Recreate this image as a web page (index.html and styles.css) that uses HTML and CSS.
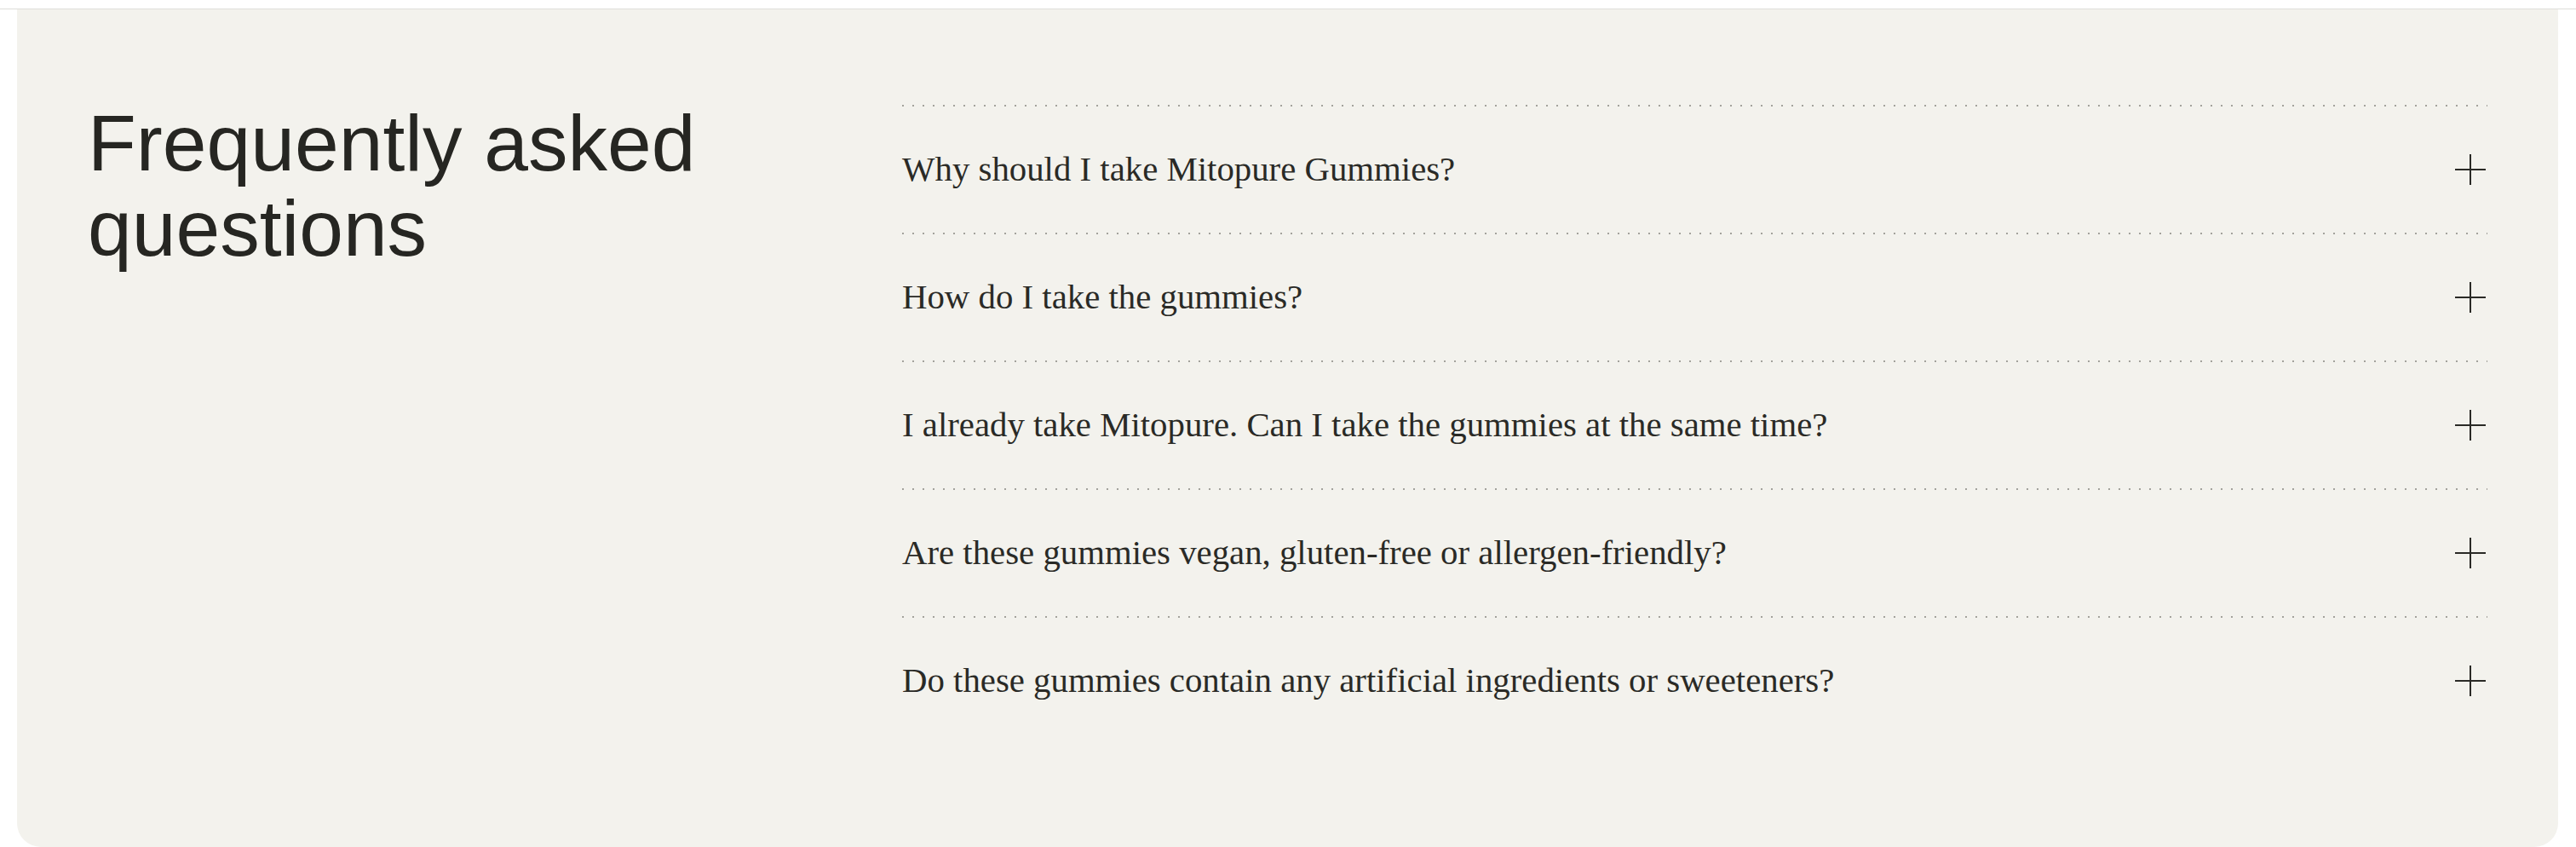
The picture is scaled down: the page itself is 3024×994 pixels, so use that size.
FILE: index.html
```html
<!DOCTYPE html>
<html lang="en">
<head>
<meta charset="utf-8">
<title>FAQ</title>
<link rel="stylesheet" href="styles.css">
</head>
<body>
<div class="topbar"></div>
<section class="faq">
  <h2 class="faq-title">Frequently asked<br>questions</h2>
  <div class="faq-list">
    <div class="faq-item"><span class="q">Why should I take Mitopure Gummies?</span><span class="plus"></span></div>
    <div class="faq-item"><span class="q">How do I take the gummies?</span><span class="plus"></span></div>
    <div class="faq-item"><span class="q">I already take Mitopure. Can I take the gummies at the same time?</span><span class="plus"></span></div>
    <div class="faq-item"><span class="q">Are these gummies vegan, gluten-free or allergen-friendly?</span><span class="plus"></span></div>
    <div class="faq-item"><span class="q">Do these gummies contain any artificial ingredients or sweeteners?</span><span class="plus"></span></div>
  </div>
</section>
</body>
</html>
```

FILE: styles.css
```css
html, body {
  margin: 0;
  padding: 0;
  background: #ffffff;
}
body {
  font-family: "Liberation Sans", Arial, sans-serif;
  color: #262622;
}
.topbar {
  height: 10px;
  border-bottom: 1px solid #deded9;
  background: #ffffff;
}
.faq {
  margin: 0 21px 0 20px;
  height: 983px;
  box-sizing: border-box;
  background: #f3f2ed;
  border-radius: 0 0 28px 28px;
  padding: 107px 83px 0 83px;
  display: grid;
  grid-template-columns: 956px 1fr;
  align-items: start;
}
.faq-title {
  margin: 0;
  font-family: "Liberation Sans", Arial, sans-serif;
  font-weight: 400;
  font-size: 93px;
  line-height: 100px;
  letter-spacing: 0;
  color: #262622;
}
.faq-list {
  margin-top: 5px;
  display: flex;
  flex-direction: column;
}
.faq-item {
  height: 150px;
  box-sizing: border-box;
  display: flex;
  align-items: center;
  justify-content: space-between;
  background-image: repeating-linear-gradient(to right, #a3a29c 0 2px, transparent 2px 12px);
  background-size: 100% 2px;
  background-repeat: no-repeat;
  background-position: 0 0;
  padding-top: 2px;
}
.q {
  font-family: "Liberation Serif", "Times New Roman", serif;
  font-size: 40.8px;
  line-height: 48px;
  color: #2a2a26;
  letter-spacing: 0;
}
.plus {
  position: relative;
  width: 36px;
  height: 36px;
  margin-right: 2px;
  flex: none;
}
.plus::before,
.plus::after {
  content: "";
  position: absolute;
  background: #2a2a26;
}
.plus::before {
  left: 0;
  top: 17px;
  width: 36px;
  height: 2px;
}
.plus::after {
  left: 17px;
  top: 0;
  width: 2px;
  height: 36px;
}
```
